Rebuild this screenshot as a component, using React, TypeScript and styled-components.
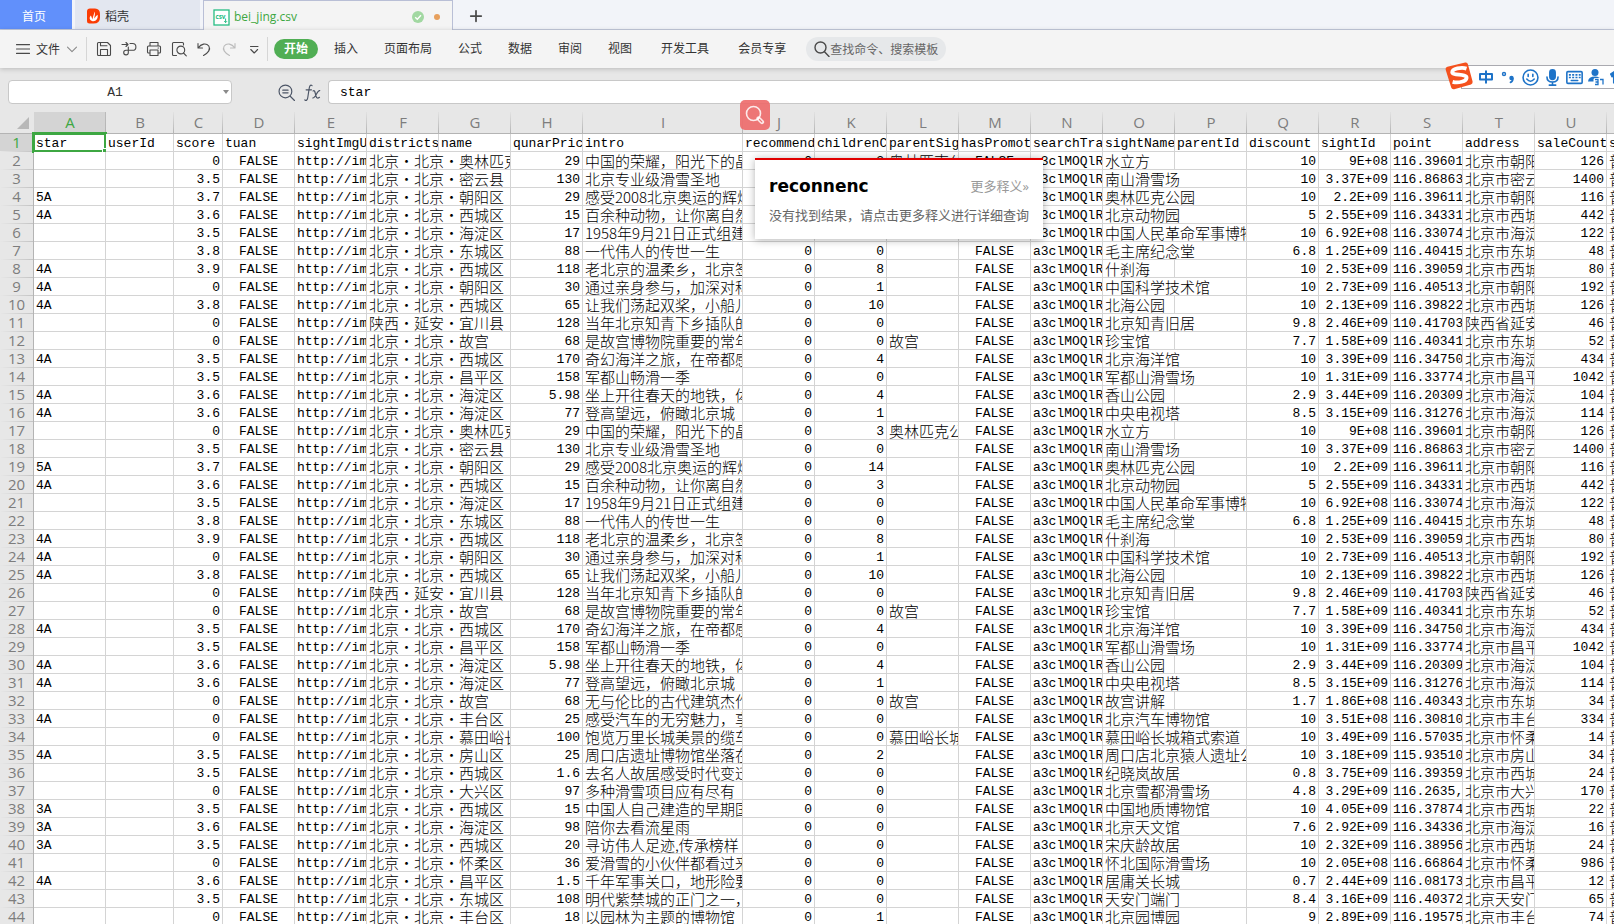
import React from 'react';
import styled, { createGlobalStyle, css } from 'styled-components';

const UI_FONT = '"Open Sans", "Noto Sans CJK SC", sans-serif';
const MONO_FONT = '"Liberation Mono", "Noto Sans CJK SC", monospace';
const HAN_FONT = '"Noto Sans CJK SC", sans-serif';

const GlobalStyle = createGlobalStyle`
  *, *::before, *::after { box-sizing: border-box; }
  body { margin: 0; background: #fff; font-family: ${UI_FONT}; font-size: 12px; color: #333; }
  button, input { font: inherit; color: inherit; }
  button { border: 0; padding: 0; background: none; cursor: pointer; }
  svg { display: block; flex: none; }
`;

/* ---------- data ---------- */

type Row = {
  star: string; score: string; district: string; price: string; intro: string;
  children: string; parent: string; name: string; discount: string;
  sightId: string; point: string; address: string; sale: string;
};

const row = (line: string): Row => {
  const [star, score, district, price, intro, children, parent, name, discount, sightId, point, address, sale] = line.split('|');
  return { star, score, district, price, intro, children, parent, name, discount, sightId, point, address, sale };
};

const firstPage: Row[] = [
  '|0|北京·北京·奥林匹克|29|中国的荣耀，阳光下的晶|3|奥林匹克公|水立方|10|9E+08|116.39601|北京市朝阳|126',
  '|3.5|北京·北京·密云县|130|北京专业级滑雪圣地|0||南山滑雪场|10|3.37E+09|116.86863|北京市密云|1400',
  '5A|3.7|北京·北京·朝阳区|29|感受2008北京奥运的辉煌|14||奥林匹克公园|10|2.2E+09|116.39611|北京市朝阳|116',
  '4A|3.6|北京·北京·西城区|15|百余种动物，让你离自然|3||北京动物园|5|2.55E+09|116.34331|北京市西城|442',
  '|3.5|北京·北京·海淀区|17|1958年9月21日正式组建|0||中国人民革命军事博物|10|6.92E+08|116.33074|北京市海淀|122',
  '|3.8|北京·北京·东城区|88|一代伟人的传世一生|0||毛主席纪念堂|6.8|1.25E+09|116.40415|北京市东城|48',
  '4A|3.9|北京·北京·西城区|118|老北京的温柔乡，北京签|8||什刹海|10|2.53E+09|116.39059|北京市西城|80',
  '4A|0|北京·北京·朝阳区|30|通过亲身参与，加深对科|1||中国科学技术馆|10|2.73E+09|116.40513|北京市朝阳|192',
  '4A|3.8|北京·北京·西城区|65|让我们荡起双桨，小船儿|10||北海公园|10|2.13E+09|116.39822|北京市西城|126',
  '|0|陕西·延安·宜川县|128|当年北京知青下乡插队的|0||北京知青旧居|9.8|2.46E+09|110.41703|陕西省延安|46',
  '|0|北京·北京·故宫|68|是故宫博物院重要的常年|0|故宫|珍宝馆|7.7|1.58E+09|116.40341|北京市东城|52',
  '4A|3.5|北京·北京·西城区|170|奇幻海洋之旅，在帝都感|4||北京海洋馆|10|3.39E+09|116.34750|北京市海淀|434',
  '|3.5|北京·北京·昌平区|158|军都山畅滑一季|0||军都山滑雪场|10|1.31E+09|116.33774|北京市昌平|1042',
  '4A|3.6|北京·北京·海淀区|5.98|坐上开往春天的地铁，体|4||香山公园|2.9|3.44E+09|116.20309|北京市海淀|104',
  '4A|3.6|北京·北京·海淀区|77|登高望远，俯瞰北京城|1||中央电视塔|8.5|3.15E+09|116.31276|北京市海淀|114',
].map(row);

const lastPage: Row[] = [
  '|0|北京·北京·故宫|68|无与伦比的古代建筑杰作|0|故宫|故宫讲解|1.7|1.86E+08|116.40343|北京市东城|34',
  '4A|0|北京·北京·丰台区|25|感受汽车的无穷魅力，享|0||北京汽车博物馆|10|3.51E+08|116.30810|北京市丰台|334',
  '|0|北京·北京·慕田峪长|100|饱览万里长城美景的缆车|0|慕田峪长城|慕田峪长城箱式索道|10|3.49E+09|116.57035|北京市怀柔|14',
  '4A|3.5|北京·北京·房山区|25|周口店遗址博物馆坐落在|2||周口店北京猿人遗址公|10|3.18E+09|115.93510|北京市房山|34',
  '|3.5|北京·北京·西城区|1.6|去名人故居感受时代变迁|0||纪晓岚故居|0.8|3.75E+09|116.39359|北京市西城|24',
  '|0|北京·北京·大兴区|97|多种滑雪项目应有尽有|0||北京雪都滑雪场|4.8|3.29E+09|116.2635,|北京市大兴|170',
  '3A|3.5|北京·北京·西城区|15|中国人自己建造的早期国|0||中国地质博物馆|10|4.05E+09|116.37874|北京市西城|22',
  '3A|3.6|北京·北京·海淀区|98|陪你去看流星雨|0||北京天文馆|7.6|2.92E+09|116.34336|北京市海淀|16',
  '3A|3.5|北京·北京·西城区|20|寻访伟人足迹,传承榜样|0||宋庆龄故居|10|2.32E+09|116.38956|北京市西城|24',
  '|0|北京·北京·怀柔区|36|爱滑雪的小伙伴都看过来|0||怀北国际滑雪场|10|2.05E+08|116.66864|北京市怀柔|986',
  '4A|3.6|北京·北京·昌平区|1.5|千年军事关口，地形险要|0||居庸关长城|0.7|2.44E+09|116.08173|北京市昌平|12',
  '|3.5|北京·北京·东城区|108|明代紫禁城的正门之一，|0||天安门端门|8.4|3.16E+09|116.40372|北京天安门|65',
  '|0|北京·北京·丰台区|18|以园林为主题的博物馆|1||北京园博园|9|2.89E+09|116.19575|北京市丰台|74',
].map(row);

const rows: Row[] = [...firstPage, ...firstPage, ...lastPage];

const columns: [string, number, string][] = [
  ['A', 72, 'star'], ['B', 68, 'userId'], ['C', 49, 'score'], ['D', 72, 'tuan'],
  ['E', 72, 'sightImgU'], ['F', 72, 'districts'], ['G', 72, 'name'], ['H', 72, 'qunarPric'],
  ['I', 160, 'intro'], ['J', 72, 'recommend'], ['K', 72, 'childrenC'], ['L', 72, 'parentSig'],
  ['M', 72, 'hasPromot'], ['N', 72, 'searchTra'], ['O', 72, 'sightName'], ['P', 72, 'parentId'],
  ['Q', 72, 'discount'], ['R', 72, 'sightId'], ['S', 72, 'point'], ['T', 72, 'address'],
  ['U', 72, 'saleCount'], ['V', 72, 's'],
];

const menuItems = ['插入', '页面布局', '公式', '数据', '审阅', '视图'];

/* ---------- shell ---------- */

const Shell = styled.div`
  position: relative;
  display: flex;
  flex-direction: column;
  height: 100vh;
  overflow: hidden;
`;

/* ---------- document tabs ---------- */

const TabBar = styled.nav`
  display: flex;
  height: 30px;
  flex: none;
  background: #f2f4f9;
  border-bottom: 1px solid #c3c9dc;
`;

const tabBase = css`
  display: flex;
  align-items: center;
  height: 29px;
  padding-top: 3px;
`;

const HomeTab = styled.button`
  ${tabBase}
  justify-content: center;
  width: 72px;
  margin-right: 3px;
  padding-right: 4px;
  color: #fff;
  background: #6190fb;
`;

const DockerTab = styled.button`
  ${tabBase}
  width: 125px;
  margin-right: 3px;
  padding-left: 12px;
  gap: 5px;
  background: #e3e7f0;
`;

const FileTab = styled.button`
  ${tabBase}
  width: 250px;
  height: 30px;
  margin-bottom: -1px;
  padding-left: 9px;
  padding-right: 12px;
  gap: 4px;
  color: #3da742;
  background: #f4f4f4;
  border: 1px solid #b9bfd6;
  border-bottom: 0;
`;

const FileName = styled.span`
  flex: 1;
  text-align: left;
  line-height: 18px;
`;

const Dot = styled.span`
  width: 6px;
  height: 6px;
  margin-left: 6px;
  border-radius: 50%;
  background: #e7a05d;
`;

const AddTab = styled.button`
  ${tabBase}
  justify-content: center;
  width: 46px;
`;

/* ---------- ribbon ---------- */

const Ribbon = styled.div`
  position: relative;
  display: flex;
  align-items: center;
  flex: none;
  height: 38px;
  padding-left: 16px;
  background: #f4f4f4;
  box-shadow: 0 1px 5px rgba(0, 0, 0, 0.2);
  white-space: nowrap;
`;

const FileButton = styled.button`
  display: flex;
  align-items: center;
  gap: 6px;
`;

const Divider = styled.span<{ $gap: number }>`
  width: 1px;
  height: 24px;
  margin-left: ${p => p.$gap}px;
  background: #d6d6d6;
`;

const QuickTools = styled.div`
  display: flex;
  gap: 9px;
  padding-left: 9px;
`;

const IconButton = styled.button`
  display: flex;
  align-items: center;
  justify-content: center;
  width: 16px;
  height: 16px;
`;

const ActiveMenu = styled.button`
  width: 44px;
  height: 20px;
  margin: 0 3px 0 6px;
  border-radius: 10px;
  background: #50ae54;
  color: #fff;
  font-weight: 700;
  line-height: 20px;
`;

const MenuButton = styled.button<{ $wide?: boolean }>`
  padding: 0 13px 0 ${p => (p.$wide ? 16 : 13)}px;
  line-height: 20px;
`;

const SearchBox = styled.label`
  display: flex;
  align-items: center;
  width: 140px;
  height: 24px;
  margin-left: 7px;
  padding-left: 8px;
  border-radius: 12px;
  background: #e6e8ea;
`;

const SearchInput = styled.input`
  width: 116px;
  padding: 0;
  border: 0;
  outline: 0;
  background: none;
  &::placeholder { color: #666; opacity: 1; }
`;

/* ---------- formula bar ---------- */

const FormulaBar = styled.div`
  display: flex;
  align-items: center;
  flex: none;
  height: 44px;
  padding: 12px 0 8px 8px;
  background: #e7e7e7;
`;

const NameBox = styled.div`
  display: flex;
  align-items: center;
  width: 224px;
  height: 24px;
  padding-right: 2px;
  border: 1px solid #c8c8c8;
  border-radius: 4px;
  background: #fff;
`;

const NameInput = styled.input`
  flex: 1;
  min-width: 0;
  padding: 1px 2px 0 0;
  border: 0;
  outline: 0;
  background: none;
  font-family: ${MONO_FONT};
  font-size: 13px;
  text-align: center;
`;

const FormulaTools = styled.div`
  display: flex;
  gap: 10px;
  padding: 0 8px 0 46px;
`;

const FormulaInput = styled.input`
  flex: 1;
  min-width: 0;
  height: 24px;
  padding: 1px 0 0 11px;
  border: 1px solid #c8c8c8;
  border-right: 0;
  border-radius: 4px 0 0 4px;
  outline: 0;
  background: #fff;
  color: #000;
  font-family: ${MONO_FONT};
  font-size: 13px;
`;

/* ---------- sheet ---------- */

const SheetArea = styled.main`
  flex: 1;
  min-height: 0;
  overflow: hidden;
`;

const Sheet = styled.table`
  width: 0;
  min-width: 100%;
  table-layout: fixed;
  border-collapse: separate;
  border-spacing: 0;
`;

const headText = css`
  padding: 0;
  font-family: "Open Sans", sans-serif;
  font-size: 15px;
  font-weight: 400;
  vertical-align: top;
`;

const Corner = styled.td`
  height: 22px;
  padding: 0 4px 4px 0;
  border-right: 1px solid #e7e7e7;
  border-bottom: 1px solid #b4b4b4;
  background: #e7e7e7;
  vertical-align: bottom;
  svg { margin-left: auto; }
`;

const ColumnHead = styled.th<{ $active: boolean }>`
  ${headText}
  height: 22px;
  line-height: 21px;
  border-bottom: 1px solid #b4b4b4;
  color: ${p => (p.$active ? '#3da742' : '#7d7d7d')};
  background:
    linear-gradient(to bottom, ${p => (p.$active ? '#bbb' : '#e2e2e2')}, #b4b4b4) right / 1px 100% no-repeat,
    ${p => (p.$active ? '#d4d4d4' : '#e7e7e7')};
`;

const RowHead = styled.th<{ $active?: boolean }>`
  ${headText}
  height: 18px;
  line-height: 16px;
  border-right: 1px solid #b4b4b4;
  color: ${p => (p.$active ? '#3da742' : '#7d7d7d')};
  background:
    linear-gradient(to right, #e7e7e7, #c4c4c4) bottom / 100% 1px no-repeat,
    ${p => (p.$active ? '#d4d4d4' : '#e7e7e7')};
`;

const Cell = styled.td<{ $align?: 'right' | 'center'; $han?: boolean }>`
  position: relative;
  height: 18px;
  padding: ${p => (p.$han ? 0 : 2)}px 2px 0;
  border-right: 1px solid #d4d4d4;
  border-bottom: 1px solid #d4d4d4;
  background: #fff;
  color: #000;
  font-family: ${p => (p.$han ? HAN_FONT : MONO_FONT)};
  font-size: ${p => (p.$han ? 15 : 13)}px;
  font-weight: ${p => (p.$han ? 300 : 400)};
  line-height: ${p => (p.$han ? 17 : 15)}px;
  text-align: ${p => p.$align ?? 'left'};
  vertical-align: top;
  white-space: nowrap;
  overflow: hidden;
`;

const SelectedCell = styled(Cell)`
  overflow: visible;
`;

const Selection = styled.span`
  position: absolute;
  inset: -2px;
  border: 3px solid #3da742;

  &::after {
    content: '';
    position: absolute;
    right: -4px;
    bottom: -4px;
    width: 6px;
    height: 6px;
    background: #3da742;
    border: 1px solid #fff;
    border-right: 0;
    border-bottom: 0;
  }
`;

/* ---------- floating layers ---------- */

const LookupButton = styled.button`
  position: absolute;
  top: 100px;
  left: 740px;
  z-index: 2;
  display: flex;
  align-items: center;
  justify-content: center;
  width: 30px;
  height: 30px;
  border-radius: 5px;
  background: rgba(237, 105, 105, 0.9);
`;

const LookupCard = styled.section`
  position: absolute;
  top: 158px;
  left: 755px;
  z-index: 2;
  width: 288px;
  height: 81px;
  padding: 16px 14px 0;
  border-top: 2px solid #e00000;
  background: #fff;
  box-shadow: 0 1px 8px rgba(0, 0, 0, 0.3);
`;

const LookupHead = styled.div`
  display: flex;
  align-items: center;
  justify-content: space-between;
`;

const LookupWord = styled.h2`
  margin: 0;
  color: #000;
  font-family: "DejaVu Sans", sans-serif;
  font-size: 17px;
  line-height: 20px;
`;

const LookupLink = styled.a`
  color: #999;
  font-size: 13px;
  line-height: 16px;
  text-decoration: none;
`;

const LookupText = styled.p`
  margin: 9px 0 0;
  color: #666;
  font-size: 13px;
  line-height: 20px;
  white-space: nowrap;
`;

const InputMethodBar = styled.div`
  position: absolute;
  top: 62px;
  right: 0;
  z-index: 2;
  display: flex;
  align-items: flex-start;
  width: 169px;
  height: 28px;
  overflow: hidden;
`;

const InputMethodTools = styled.div`
  display: flex;
  align-items: center;
  gap: 4px;
  height: 24px;
  margin: 3px 0 0 -14px;
  padding-left: 15px;
  border: 1px solid #aaaab0;
  border-right: 0;
  background: #fff;
`;

const InputMethodLogo = styled.span`
  position: relative;
  z-index: 1;
`;

const ToolButton = styled(IconButton)`
  width: 18px;
  height: 22px;
  flex: none;
`;

/* ---------- icons ---------- */

type IconProps = { children: React.ReactNode; size?: number; color?: string; width?: number };

const Icon = ({ children, size = 16, color = '#4a4a4a', width = 1.1 }: IconProps) => (
  <svg width={size} height={size} viewBox="0 0 16 16" fill="none" stroke={color} strokeWidth={width} strokeLinecap="round" strokeLinejoin="round" aria-hidden="true">
    {children}
  </svg>
);

const FlameLogo = () => (
  <svg width="13" height="16" viewBox="0 0 13 16" aria-hidden="true">
    <path d="M0 3.5Q0 0.5 3 0.5H8Q13 0.8 13 6V9.5Q13 15.5 6.5 15.5H2.5Q0 15.5 0 13Z" fill="#fb3c04" />
    <path d="M6.8 3.2C8 6 5.6 7.5 5.8 11.4C5.2 10.6 4.4 9 3.9 7.6C1.9 9.4 2.3 12.6 5.6 13.2C9.2 13.6 11.3 10.6 10.6 6.8C9.4 7.6 8.3 8.8 7.4 10.4C7.3 7.8 9 5.6 6.8 3.2Z" fill="#fff" />
  </svg>
);

const CsvLogo = () => (
  <svg width="17" height="17" viewBox="0 0 17 17" aria-hidden="true">
    <rect x="1" y="1" width="15" height="15" fill="#fff" stroke="#27bd84" strokeWidth="1.3" />
    <text x="2.4" y="9.6" fontSize="6.4" fontWeight="700" fontFamily="Open Sans, sans-serif" fill="#27bd84">csv</text>
    <path d="M12.6 9.5v4M11.2 12.2l1.4 1.4l1.4-1.4" fill="none" stroke="#27bd84" strokeWidth="1" />
  </svg>
);

const CheckBadge = () => (
  <svg width="12" height="12" viewBox="0 0 12 12" aria-hidden="true">
    <circle cx="6" cy="6" r="6" fill="#a2d8a2" />
    <path d="M3.2 6.2L5.3 8.2L9 4.2" fill="none" stroke="#fff" strokeWidth="1.4" />
  </svg>
);

const SougouLogo = () => (
  <svg width="30" height="28" viewBox="0 0 30 28" aria-hidden="true">
    <path d="M2.4 4.8L20.2 0.6Q22.4 0.2 22.9 2.2L27.6 19.6Q28 21.8 26 22.4L9.2 27.2Q6.8 27.6 6.2 25.6L0.6 7.6Q0.2 5.4 2.4 4.8Z" fill="#f4511e" />
    <path d="M21.5 6.6C16.6 5 7 6.600 7.200 10.400C7.400 13.600 21.800 11.800 21.600 15.800C21.400 19.400 13.400 21.400 7.600 19.800" fill="none" stroke="#fff" strokeWidth="3.800" />
  </svg>
);

const BLUE = '#1e73c8';

/* ---------- sheet rows ---------- */

const SheetRow = ({ r, index }: { r: Row; index: number }) => {
  const spills = r.name.length > 4;
  return (
    <tr>
      <RowHead scope="row">{index}</RowHead>
      <Cell>{r.star}</Cell>
      <Cell />
      <Cell $align="right">{r.score}</Cell>
      <Cell $align="center">FALSE</Cell>
      <Cell>http://im</Cell>
      <Cell $han colSpan={2}>{r.district}</Cell>
      <Cell $align="right">{r.price}</Cell>
      <Cell $han>{r.intro}</Cell>
      <Cell $align="right">0</Cell>
      <Cell $align="right">{r.children}</Cell>
      <Cell $han>{r.parent}</Cell>
      <Cell $align="center">FALSE</Cell>
      <Cell>a3clMOQlR</Cell>
      <Cell $han colSpan={spills ? 2 : 1}>{r.name}</Cell>
      {!spills && <Cell />}
      <Cell $align="right">{r.discount}</Cell>
      <Cell $align="right">{r.sightId}</Cell>
      <Cell>{r.point}</Cell>
      <Cell $han>{r.address}</Cell>
      <Cell $align="right">{r.sale}</Cell>
      <Cell $han>普</Cell>
    </tr>
  );
};

export default function App() {
  return (
    <>
      <GlobalStyle />
      <Shell lang="zh-CN">
        <TabBar>
          <HomeTab>首页</HomeTab>
          <DockerTab><FlameLogo />稻壳</DockerTab>
          <FileTab>
            <CsvLogo />
            <FileName>bei_jing.csv</FileName>
            <CheckBadge />
            <Dot />
          </FileTab>
          <AddTab aria-label="新建">
            <Icon size={14} width={2}><path d="M8 2v12M2 8h12" /></Icon>
          </AddTab>
        </TabBar>

        <Ribbon>
          <FileButton>
            <Icon size={14} width={1.3}><path d="M0.6 3h15M0.6 8h15M0.6 13h15" /></Icon>
            文件
            <Icon size={12} color="#888" width={1.4}><path d="M2 5.5L8 11.5L14 5.5" /></Icon>
          </FileButton>
          <Divider $gap={8} />
          <QuickTools>
            <IconButton aria-label="保存">
              <Icon><path d="M1.5 2.5q0-1 1-1h9l3 3v9q0 1-1 1h-11q-1 0-1-1zM4.5 1.8v3h6.5M4.5 14.3v-5.8h7v5.8" /></Icon>
            </IconButton>
            <IconButton aria-label="输出">
              <Icon><path d="M1 3.5h6M5 1.5l2 2l-2 2M9 2.5h2.5a3.3 3.3 0 0 1 0 6.8h-6.5a2.3 2.3 0 1 0 2.3 2.4V6" /></Icon>
            </IconButton>
            <IconButton aria-label="打印">
              <Icon><path d="M4 5V1.5h8V5M4 12H2.5q-1 0-1-1V6q0-1 1-1h11q1 0 1 1v5q0 1-1 1H12M4 9h8v5.5H4zM12 7h.5" /></Icon>
            </IconButton>
            <IconButton aria-label="打印预览">
              <Icon><path d="M5.5 14.5h-3q-1 0-1-1v-11q0-1 1-1h9q1 0 1 1v1.5M12.5 12l2.8 2.8" /><circle cx="9.8" cy="9" r="3.9" /></Icon>
            </IconButton>
            <IconButton aria-label="撤销">
              <Icon><path d="M2 2.5v4.5h4.5M2.3 6.8C5 3 10 1.5 12.8 5C15 8.5 12 12 7.5 14.5" /></Icon>
            </IconButton>
            <IconButton aria-label="恢复">
              <Icon color="#bbb"><path d="M14 2.5v4.5H9.5M13.7 6.8C11 3 6 1.5 3.2 5C1 8.5 4 12 8.5 14.5" /></Icon>
            </IconButton>
            <IconButton aria-label="更多工具">
              <Icon><path d="M4.5 5.500h7.500M4.800 8.500l3.400 3.500l3.400-3.500" /></Icon>
            </IconButton>
          </QuickTools>
          <Divider $gap={5} />
          <ActiveMenu>开始</ActiveMenu>
          {menuItems.map(item => <MenuButton key={item}>{item}</MenuButton>)}
          <MenuButton $wide>开发工具</MenuButton>
          <MenuButton $wide>会员专享</MenuButton>
          <SearchBox>
            <Icon width={1.4}><circle cx="6.5" cy="6.5" r="5.5" /><path d="M10.5 10.8L15 15.5" /></Icon>
            <SearchInput placeholder="查找命令、搜索模板" aria-label="查找命令、搜索模板" />
          </SearchBox>
        </Ribbon>

        <FormulaBar>
          <NameBox>
            <NameInput defaultValue="A1" aria-label="名称框" />
            <svg width="6" height="4" viewBox="0 0 6 4" aria-hidden="true"><path d="M0 0h6L3 4z" fill="#8a8a8a" /></svg>
          </NameBox>
          <FormulaTools>
            <IconButton aria-label="查找函数">
              <Icon size={17} color="#4c5566"><circle cx="7" cy="7" r="6" /><path d="M11.5 11.5L15.5 15.5M4.5 5.8h5M4.5 8.3h5" /></Icon>
            </IconButton>
            <IconButton aria-label="插入函数">
              <Icon size={17} color="#4c5566"><path d="M7.6 1.5C6 0.3 5.2 2 4.9 4L3.6 12.5C3.3 15 2.2 16 0.8 15M2 5.5h5M8.5 6.5C10.5 5.5 10.5 9 11.3 11.5C11.9 13.5 13 13.7 14.6 12.5M14.8 6.2C12.5 5.5 11 13.5 8.2 13.2" /></Icon>
            </IconButton>
          </FormulaTools>
          <FormulaInput defaultValue="star" aria-label="编辑栏" />
        </FormulaBar>

        <SheetArea>
          <Sheet>
            <colgroup>
              <col width="34" />
              {columns.map(([letter, width]) => <col key={letter} width={width} />)}
            </colgroup>
            <thead>
              <tr>
                <Corner>
                  <svg width="12" height="12" viewBox="0 0 12 12" aria-hidden="true"><path d="M12 0v12H0z" fill="#b8b8b8" /></svg>
                </Corner>
                {columns.map(([letter]) => (
                  <ColumnHead key={letter} scope="col" $active={letter === 'A'}>{letter}</ColumnHead>
                ))}
              </tr>
            </thead>
            <tbody>
              <tr>
                <RowHead scope="row" $active>1</RowHead>
                {columns.map(([letter, , title]) =>
                  letter === 'A'
                    ? <SelectedCell key={letter}>{title}<Selection /></SelectedCell>
                    : <Cell key={letter}>{title}</Cell>
                )}
              </tr>
              {rows.map((r, i) => <SheetRow key={i} r={r} index={i + 2} />)}
            </tbody>
          </Sheet>
        </SheetArea>

        <LookupButton aria-label="查词">
          <svg width="20" height="20" viewBox="0 0 20 20" fill="none" stroke="#fff" strokeOpacity="0.85" aria-hidden="true">
            <circle cx="8.5" cy="8.5" r="7" strokeWidth="1.6" />
            <path d="M13.5 13.5L17 17" strokeWidth="4.2" strokeLinecap="round" />
            <path d="M14.5 14.5L16.8 16.8" stroke="#ee7575" strokeOpacity="1" strokeWidth="1.2" strokeLinecap="round" />
          </svg>
        </LookupButton>

        <LookupCard>
          <LookupHead>
            <LookupWord>reconnenc</LookupWord>
            <LookupLink href="#more">更多释义»</LookupLink>
          </LookupHead>
          <LookupText>没有找到结果，请点击更多释义进行详细查询</LookupText>
        </LookupCard>

        <InputMethodBar>
          <InputMethodLogo><SougouLogo /></InputMethodLogo>
          <InputMethodTools>
            <ToolButton aria-label="中文">
              <Icon color={BLUE} width={2}><path d="M2 5h12v5.5H2zM8 1.5v13" strokeLinecap="butt" /></Icon>
            </ToolButton>
            <ToolButton aria-label="标点">
              <Icon color={BLUE} width={1.4}><circle cx="4" cy="5" r="1.5" /><circle cx="11.5" cy="9" r="1.5" fill={BLUE} /><path d="M12.8 9.5q0 3-2.3 3.8" strokeWidth="1.8" /></Icon>
            </ToolButton>
            <ToolButton aria-label="表情">
              <Icon size={17} color={BLUE} width={1.5}><circle cx="8" cy="8" r="7" /><path d="M5.8 5v2M10.2 5v2M4.5 9.5q3.5 4 7 0" /></Icon>
            </ToolButton>
            <ToolButton aria-label="语音">
              <Icon size={17} color={BLUE} width={1.5}><rect x="5.5" y="0.8" width="5" height="9" rx="2.5" fill={BLUE} /><path d="M2.8 7.5q0 4.7 5.2 4.7t5.2-4.7M8 12.5v2.5M5 15.2h6" /></Icon>
            </ToolButton>
            <ToolButton aria-label="键盘">
              <Icon size={17} color={BLUE} width={1.5}><rect x="0.8" y="2.5" width="14.4" height="11" rx="1" /><path d="M3.5 5.5h9.5M3.5 8h9.5" strokeWidth="1.6" strokeDasharray="0.3 2.8" strokeLinecap="square" /><path d="M5 10.8h6" /></Icon>
            </ToolButton>
            <ToolButton aria-label="账户">
              <svg width="18" height="18" viewBox="0 0 18 18" aria-hidden="true">
                <circle cx="8" cy="4.5" r="3.5" fill={BLUE} />
                <path d="M1 13.5Q1.5 8.5 8 8.5Q13.5 8.5 14.5 13.5Z" fill={BLUE} />
                <rect x="6.5" y="10" width="11" height="7.5" rx="1.5" fill="#fff" />
                <path d="M8 11.5h3v5h-3M8.5 14h2.5M13 11.5h3V16.5" fill="none" stroke={BLUE} strokeWidth="1.3" />
              </svg>
            </ToolButton>
            <ToolButton aria-label="皮肤">
              <Icon color={BLUE}><path d="M5 2L0.5 5l1.5 3l1.5-1v7h9V7l1.5 1l1.5-3L11 2q-3 2.5-6 0z" fill={BLUE} /></Icon>
            </ToolButton>
          </InputMethodTools>
        </InputMethodBar>
      </Shell>
    </>
  );
}
